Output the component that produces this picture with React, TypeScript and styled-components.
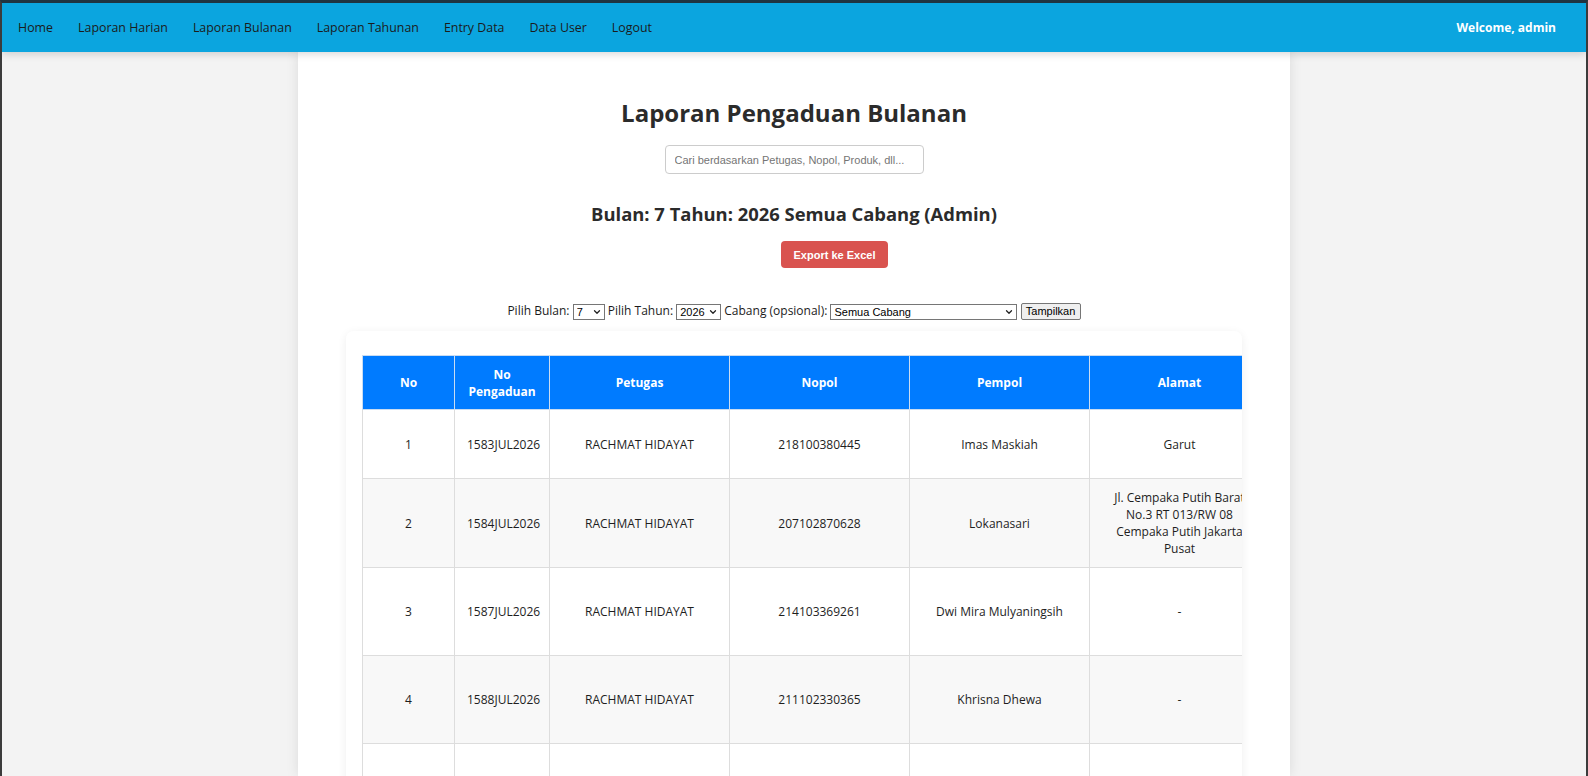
import styled, { createGlobalStyle } from "styled-components";
import { ChevronDown } from "lucide-react";

const GlobalStyle = createGlobalStyle`
  * {
    box-sizing: border-box;
  }
  html, body {
    margin: 0;
    padding: 0;
    height: 100%;
  }
  body {
    font-family: 'Open Sans', 'Noto Sans', sans-serif;
    background: #f3f3f3;
  }
`;

const StyledFrame = styled.div`
  display: flex;
  flex-direction: column;
  height: 100vh;
  overflow: hidden;
  background: #f3f3f3;
  border-left: 2px solid #3b3b3b;
  border-right: 2px solid #3b3b3b;
  border-top: 3px solid #1f3441;
`;

const StyledNav = styled.nav`
  position: relative;
  z-index: 2;
  display: flex;
  align-items: center;
  flex-shrink: 0;
  height: 49px;
  padding: 0 30px 0 16px;
  background: #0ba5df;
  box-shadow: 0 2px 8px rgba(0, 0, 0, 0.16);
`;

const StyledNavLinks = styled.div`
  display: flex;
  align-items: center;
  gap: 25px;
`;

const StyledNavLink = styled.a`
  color: #1b1b1b;
  font-size: 12.4px;
  text-decoration: none;
  cursor: pointer;
`;

const StyledWelcome = styled.span`
  margin-left: auto;
  color: #ffffff;
  font-size: 12px;
  font-weight: 700;
`;

const StyledMain = styled.main`
  flex: 1;
  display: flex;
  justify-content: center;
  min-height: 0;
`;

const StyledContainer = styled.div`
  display: flex;
  flex-direction: column;
  align-items: center;
  width: 992px;
  background: #ffffff;
  box-shadow: 0 0 12px rgba(0, 0, 0, 0.1);

  & > * {
    flex-shrink: 0;
  }
`;

const StyledTitle = styled.h2`
  margin: 45px 0 0;
  color: #2b2b2b;
  font-size: 24px;
  line-height: 32px;
  font-weight: 700;
`;

const StyledSearch = styled.input`
  margin-top: 16px;
  width: 259px;
  height: 29px;
  padding: 0 9px;
  border: 1px solid #cccccc;
  border-radius: 4px;
  font-family: 'Liberation Sans', Arial, sans-serif;
  font-size: 11px;
  color: #333;
  outline: none;

  &::placeholder {
    color: #757575;
  }
`;

const StyledSubtitle = styled.h3`
  margin: 28px 0 0;
  color: #2b2b2b;
  font-size: 18.4px;
  line-height: 24px;
  font-weight: 700;
`;

const StyledExportButton = styled.button`
  margin: 15px 0 0 81px;
  width: 107px;
  height: 27px;
  border: none;
  border-radius: 4px;
  background: #d9534f;
  color: #ffffff;
  font-family: 'Liberation Sans', Arial, sans-serif;
  font-size: 11px;
  font-weight: 700;
  cursor: pointer;
`;

const StyledFilterForm = styled.form`
  margin-top: 34px;
  height: 18px;
  line-height: 18px;
  font-size: 12px;
  color: #1b1b1b;
  white-space: nowrap;
`;

const StyledSelectWrap = styled.span`
  position: relative;
  display: inline-block;
  vertical-align: middle;
  width: ${(p) => p.$width}px;
  height: 16px;

  svg {
    position: absolute;
    right: 3px;
    top: 3px;
    pointer-events: none;
  }
`;

const StyledSelect = styled.select`
  appearance: none;
  display: block;
  width: 100%;
  height: 16px;
  margin: 0;
  padding: 0 0 0 3px;
  border: 1px solid #767676;
  border-radius: 0;
  background: #ffffff;
  color: #000;
  font-family: 'Liberation Sans', Arial, sans-serif;
  font-size: 11px;
  line-height: 14px;
`;

const StyledShowButton = styled.button`
  vertical-align: middle;
  width: 60px;
  height: 17px;
  padding: 0;
  border: 1px solid #767676;
  border-radius: 2px;
  background: #efefef;
  color: #000;
  font-family: 'Liberation Sans', Arial, sans-serif;
  font-size: 11px;
  line-height: 15px;
`;

const StyledCard = styled.div`
  margin-top: 11px;
  width: 896px;
  padding: 24px 0 24px 16px;
  background: #ffffff;
  border-radius: 8px;
  box-shadow: 0 2px 10px rgba(0, 0, 0, 0.07);
  overflow-x: auto;
`;

const StyledTable = styled.table`
  table-layout: fixed;
  border-collapse: collapse;
  width: ${(p) => p.$width}px;
  font-size: 12px;
  line-height: 17px;
  color: #1e1e1e;
`;

const StyledHeadCell = styled.th`
  padding: 9.5px 8px;
  background: #007bff;
  border: 1px solid #c9dcf2;
  color: #ffffff;
  font-weight: 700;
  text-align: center;
  vertical-align: middle;
`;

const StyledRow = styled.tr`
  height: ${(p) => p.$height}px;
  background: ${(p) => (p.$striped ? "#f8f8f8" : "#ffffff")};
`;

const StyledCell = styled.td`
  padding: 10px 12px;
  border: 1px solid #dddddd;
  text-align: center;
  vertical-align: middle;
  white-space: ${(p) => (p.$nowrap ? "nowrap" : "normal")};
`;

const navItems = [
  "Home",
  "Laporan Harian",
  "Laporan Bulanan",
  "Laporan Tahunan",
  "Entry Data",
  "Data User",
  "Logout",
];

const columns = [
  { label: "No", width: 92 },
  { label: "No Pengaduan", width: 95 },
  { label: "Petugas", width: 180 },
  { label: "Nopol", width: 180 },
  { label: "Pempol", width: 180 },
  { label: "Alamat", width: 180 },
  { label: "Produk", width: 180 },
  { label: "Keluhan", width: 180 },
  { label: "Status", width: 180 },
];

const rows = [
  {
    no: 1,
    kode: "1583JUL2026",
    petugas: "RACHMAT HIDAYAT",
    nopol: "218100380445",
    pempol: "Imas Maskiah",
    alamat: "Garut",
    produk: "Asuransi",
    keluhan: "Klaim",
    status: "Selesai",
    height: 69,
  },
  {
    no: 2,
    kode: "1584JUL2026",
    petugas: "RACHMAT HIDAYAT",
    nopol: "207102870628",
    pempol: "Lokanasari",
    alamat: "Jl. Cempaka Putih Barat No.3 RT 013/RW 08 Cempaka Putih Jakarta Pusat",
    produk: "Asuransi",
    keluhan: "Klaim",
    status: "Selesai",
    height: 88,
  },
  {
    no: 3,
    kode: "1587JUL2026",
    petugas: "RACHMAT HIDAYAT",
    nopol: "214103369261",
    pempol: "Dwi Mira Mulyaningsih",
    alamat: "-",
    produk: "Asuransi",
    keluhan: "Klaim",
    status: "Selesai",
    height: 88,
  },
  {
    no: 4,
    kode: "1588JUL2026",
    petugas: "RACHMAT HIDAYAT",
    nopol: "211102330365",
    pempol: "Khrisna Dhewa",
    alamat: "-",
    produk: "Asuransi",
    keluhan: "Klaim",
    status: "Selesai",
    height: 88,
  },
  {
    no: 5,
    kode: "1590JUL2026",
    petugas: "RACHMAT HIDAYAT",
    nopol: "219100412207",
    pempol: "Siti Nurhasanah",
    alamat: "-",
    produk: "Asuransi",
    keluhan: "Klaim",
    status: "Proses",
    height: 88,
  },
];

const tableWidth = columns.reduce((sum, c) => sum + c.width, 0);

const months = Array.from({ length: 12 }, (_, i) => i + 1);

export default function App() {
  return (
    <>
      <GlobalStyle />
      <StyledFrame>
        <StyledNav>
          <StyledNavLinks>
            {navItems.map((item) => (
              <StyledNavLink key={item}>{item}</StyledNavLink>
            ))}
          </StyledNavLinks>
          <StyledWelcome>Welcome, admin</StyledWelcome>
        </StyledNav>

        <StyledMain>
          <StyledContainer>
            <StyledTitle>Laporan Pengaduan Bulanan</StyledTitle>
            <StyledSearch placeholder="Cari berdasarkan Petugas, Nopol, Produk, dll..." />

            <StyledSubtitle>Bulan: 7 Tahun: 2026 Semua Cabang (Admin)</StyledSubtitle>
            <StyledExportButton>Export ke Excel</StyledExportButton>

            <StyledFilterForm onSubmit={(e) => e.preventDefault()}>
              Pilih Bulan:{" "}
              <StyledSelectWrap $width={32}>
                <StyledSelect defaultValue="7">
                  {months.map((m) => (
                    <option key={m} value={m}>{m}</option>
                  ))}
                </StyledSelect>
                <ChevronDown size={10} strokeWidth={3} color="#222" />
              </StyledSelectWrap>{" "}
              Pilih Tahun:{" "}
              <StyledSelectWrap $width={45}>
                <StyledSelect defaultValue="2026">
                  <option value="2025">2025</option>
                  <option value="2026">2026</option>
                </StyledSelect>
                <ChevronDown size={10} strokeWidth={3} color="#222" />
              </StyledSelectWrap>{" "}
              Cabang (opsional):{" "}
              <StyledSelectWrap $width={187}>
                <StyledSelect defaultValue="">
                  <option value="">Semua Cabang</option>
                </StyledSelect>
                <ChevronDown size={10} strokeWidth={3} color="#222" />
              </StyledSelectWrap>{" "}
              <StyledShowButton type="submit">Tampilkan</StyledShowButton>
            </StyledFilterForm>

            <StyledCard>
              <StyledTable $width={tableWidth}>
                <colgroup>
                  {columns.map((c) => (
                    <col key={c.label} style={{ width: c.width }} />
                  ))}
                </colgroup>
                <thead>
                  <tr>
                    {columns.map((c) => (
                      <StyledHeadCell key={c.label}>{c.label}</StyledHeadCell>
                    ))}
                  </tr>
                </thead>
                <tbody>
                  {rows.map((r, i) => (
                    <StyledRow key={r.no} $height={r.height} $striped={i % 2 === 1}>
                      <StyledCell>{r.no}</StyledCell>
                      <StyledCell $nowrap>{r.kode}</StyledCell>
                      <StyledCell>{r.petugas}</StyledCell>
                      <StyledCell>{r.nopol}</StyledCell>
                      <StyledCell>{r.pempol}</StyledCell>
                      <StyledCell>{r.alamat}</StyledCell>
                      <StyledCell>{r.produk}</StyledCell>
                      <StyledCell>{r.keluhan}</StyledCell>
                      <StyledCell>{r.status}</StyledCell>
                    </StyledRow>
                  ))}
                </tbody>
              </StyledTable>
            </StyledCard>
          </StyledContainer>
        </StyledMain>
      </StyledFrame>
    </>
  );
}
